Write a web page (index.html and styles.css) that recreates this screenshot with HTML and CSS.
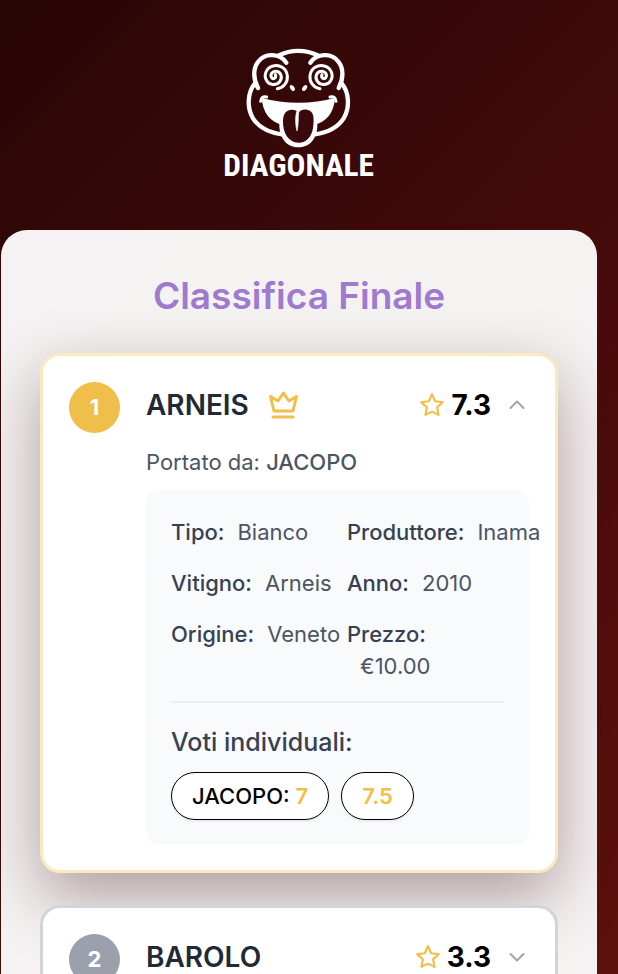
FILE: index.html
```html
<!DOCTYPE html>
<html lang="it">
<head>
<meta charset="utf-8">
<meta name="viewport" content="width=device-width, initial-scale=1">
<title>Diagonale - Classifica Finale</title>
<link rel="stylesheet" href="styles.css">
</head>
<body>
<svg class="sprite" aria-hidden="true">
  <symbol id="star" viewBox="0 0 24 24"><path d="M12 2l2.900 6.500 7 .900-5.200 4.800 1.400 6.900-6.100-3-6.100 3 1.400-6.900-5.200-4.800 7-.900z"/></symbol>
  <symbol id="crown" viewBox="0 0 32 28"><path d="M6 20 2.500 5.500 10 10 15.500 2 21 10 28.500 5.500 25 20zM5 26h20"/></symbol>
  <symbol id="up" viewBox="0 0 20 20"><path d="M3.500 13 10 6.500 16.500 13"/></symbol>
  <symbol id="down" viewBox="0 0 20 20"><path d="M3.500 7 10 13.500 16.500 7"/></symbol>
</svg>
<header class="header">
  <svg class="logo" viewBox="24 21 456 393" role="img" aria-label="Diagonale">
    <g class="logo-lines">
      <path d="M191 46C228 28 272 28 309 46"/>
      <path d="M214 68C195 41 151 36 129 66C114 86 114 116 129 144"/>
      <path d="M286 68C305 41 349 36 371 66C386 86 386 116 371 144"/>
      <path d="M120 130C97 157 95 204 114 235C134 266 165 278 201 283"/>
      <path d="M380 130C403 157 405 204 386 235C366 266 335 278 299 283"/>
    </g>
    <g class="logo-spiral">
      <path d="M137 184C138 173 144 168 155 171"/>
      <path d="M363 184C362 173 356 168 345 171"/>
    </g>
    <g id="eye" class="logo-spiral">
      <path d="M187 146C207 143 219 126 217 107C214 84 193 73 174 78C153 83 145 106 155 122C163 136 184 137 194 125C204 113 198 96 184 94C172 92 164 104 170 113C176 120 185 113 181 104"/>
    </g>
    <use href="#eye" transform="matrix(-1 0 0 1 502 0)"/>
    <g class="logo-fill">
      <ellipse cx="232" cy="144" rx="6" ry="10" transform="rotate(-35 232 144)"/>
      <ellipse cx="269" cy="144" rx="6" ry="10" transform="rotate(35 269 144)"/>
      <path d="M140 173C207 193 293 193 360 173C357 218 334 246 298 254L202 254C166 246 143 218 140 173Z"/>
      <path d="M194 240C188 285 209 322 250 322C291 322 312 285 306 240Z"/>
    </g>
    <path class="logo-tongue" d="M204 242C205 216 219 207 237 210C245 211 249 215 251 218C257 209 266 207 276 209C298 212 298 236 294 264C290 292 272 309 250 308C220 307 203 278 204 242Z"/>
    <path class="logo-crease" d="M245 214C240 233 241 255 246 273C251 255 249 233 251 216Z"/>
    <text class="logo-word" x="251" y="408" text-anchor="middle">DIAGONALE</text>
  </svg>
</header>
<main class="panel">
  <h1 class="title">Classifica Finale</h1>
  <ol class="ranking">
    <li class="card card-first">
      <span class="rank">1</span>
      <div class="content">
        <div class="top">
          <h2 class="name">ARNEIS</h2>
          <svg class="icon crown"><use href="#crown"/></svg>
          <span class="score"><svg class="icon star"><use href="#star"/></svg>7.3</span>
          <button class="toggle" type="button" aria-label="Chiudi dettagli" aria-expanded="true"><svg class="icon chevron"><use href="#up"/></svg></button>
        </div>
        <p class="brought">Portato da: <strong>JACOPO</strong></p>
        <section class="details">
          <dl class="facts">
            <div><dt>Tipo:</dt><dd>Bianco</dd></div>
            <div><dt>Produttore:</dt><dd>Inama</dd></div>
            <div><dt>Vitigno:</dt><dd>Arneis</dd></div>
            <div><dt>Anno:</dt><dd>2010</dd></div>
            <div><dt>Origine:</dt><dd>Veneto</dd></div>
            <div class="stacked"><dt>Prezzo:</dt><dd>€10.00</dd></div>
          </dl>
          <div class="votes">
            <h3 class="votes-title">Voti individuali:</h3>
            <ul class="pills">
              <li class="pill">JACOPO: <b>7</b></li>
              <li class="pill"><b>7.5</b></li>
            </ul>
          </div>
        </section>
      </div>
    </li>
    <li class="card card-second">
      <span class="rank">2</span>
      <div class="content">
        <div class="top">
          <h2 class="name">BAROLO</h2>
          <span class="score"><svg class="icon star"><use href="#star"/></svg>3.3</span>
          <button class="toggle" type="button" aria-label="Apri dettagli" aria-expanded="false"><svg class="icon chevron"><use href="#down"/></svg></button>
        </div>
      </div>
    </li>
  </ol>
</main>
</body>
</html>
```
FILE: styles.css
```css
* { box-sizing: border-box; }
html { background: #2a0606; scrollbar-width: none; }
body {
  min-height: 100vh;
  margin: 0;
  padding: 0 21px 0 1px;
  display: flex;
  flex-direction: column;
  background: linear-gradient(135deg, #280606 0%, #450a0a 50%, #60120d 100%);
  font-family: Inter, "Liberation Sans", sans-serif;
  font-size: 22px;
  line-height: 32px;
  color: #4b5563;
}
h1, h2, h3, p, ul, ol, dl, dd { margin: 0; padding: 0; }
ul, ol { list-style: none; }
.sprite { display: none; }

.header { display: flex; justify-content: center; padding: 47px 0 52px; }
.logo { width: 152px; height: 131px; overflow: visible; }
.logo-lines, .logo-spiral { fill: none; stroke: #fff; stroke-linecap: round; }
.logo-lines { stroke-width: 13; }
.logo-spiral { stroke-width: 9; }
.logo-fill, .logo-word { fill: #fff; }
.logo-tongue { fill: #3a0909; }
.logo-crease { fill: #fff; stroke: #fff; stroke-width: 2; }
.logo-word { font: bold 94px "Roboto Condensed", "Open Sans Condensed", "Liberation Sans Narrow", sans-serif; }

.panel {
  flex: 1 0 auto;
  padding: 40px 39px;
  border-radius: 26px 26px 0 0;
  background: rgba(255, 255, 255, 0.95);
}
.title {
  margin-bottom: 31px;
  font-size: 37px;
  line-height: 52px;
  font-weight: 600;
  text-align: center;
  color: #9f7bcf;
}
.ranking { display: grid; gap: 32px; }
.card {
  display: flex;
  align-items: flex-start;
  gap: 26px;
  padding: 26px;
  border: 3px solid #d1d5db;
  border-radius: 20px;
  background: #fff;
}
.card-first {
  border-color: #fbe9c0;
  box-shadow: 0 24px 64px rgba(50, 10, 15, 0.36);
}
.card-second { position: relative; }
.rank {
  flex: none;
  width: 51px;
  height: 51px;
  border-radius: 50%;
  background: #f0be4a;
  color: #fff;
  font-weight: 700;
  line-height: 51px;
  text-align: center;
}
.card-second .rank { background: #9ca0ac; }
.content { flex: 1; min-width: 0; }
.top { display: flex; align-items: center; height: 46px; }
.name { font-size: 28px; font-weight: 600; color: #1f2937; }
.icon { display: block; fill: none; stroke: #f0be4a; stroke-linejoin: round; stroke-linecap: round; }
.crown { width: 32px; height: 28px; margin-left: 19px; stroke-width: 3; }
.star { width: 26px; height: 26px; stroke-width: 2; }
.score {
  display: flex;
  align-items: center;
  gap: 6px;
  margin-left: auto;
  font-size: 28px;
  font-weight: 700;
  color: #000;
}
.toggle { padding: 0; margin: 0 2px 0 16px; border: 0; background: none; cursor: pointer; }
.chevron { width: 20px; height: 20px; stroke: #9ca3af; stroke-width: 2; }
.brought { margin: 18px 0 12px; }
.brought strong { font-weight: 500; }

.details { padding: 26px 25px 24px; border-radius: 13px; background: #f9fafc; }
.facts { display: grid; grid-template-columns: repeat(2, minmax(0, 1fr)); gap: 19px; }
.facts div { white-space: nowrap; }
.facts dt { display: inline-block; font-weight: 500; color: #374151; }
.facts dd { display: inline-block; margin-left: 13px; }
.facts .stacked dd { display: block; }
.votes { margin-top: 19px; padding-top: 21px; border-top: 2px solid #eceef1; }
.votes-title { margin-bottom: 12px; font-size: 25px; line-height: 36px; font-weight: 500; color: #374151; }
.pills { display: flex; gap: 12px; }
.pill {
  padding: 7px 20px;
  border: 1px solid #000;
  border-radius: 24px;
  background: #fff;
  box-shadow: 0 1px 3px rgba(0, 0, 0, 0.1);
  font-weight: 500;
  color: #000;
}
.pill b { font-weight: 600; color: #f0be4a; }
```
